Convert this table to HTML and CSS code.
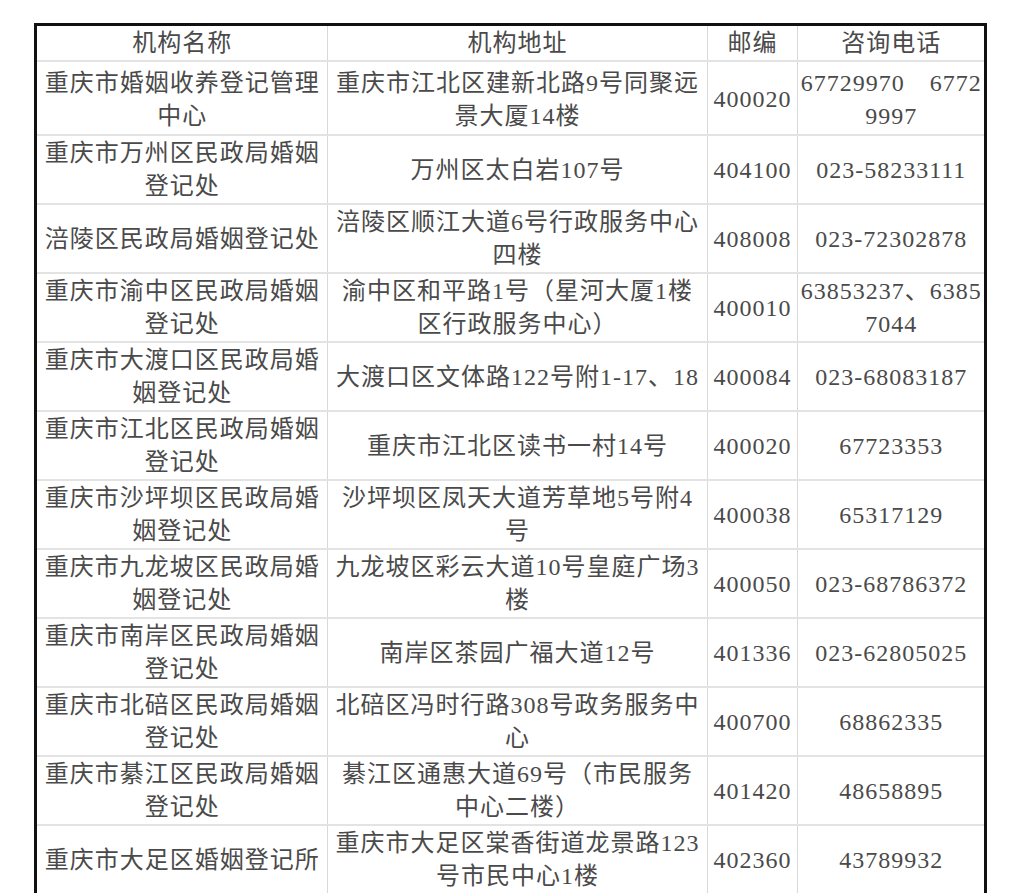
FILE: index.html
```html
<!DOCTYPE html>
<html lang="zh-CN">
<head>
<meta charset="utf-8">
<title>婚姻登记机构</title>
<link rel="stylesheet" href="styles.css">
</head>
<body>
<div class="frame">
<table class="grid">
<colgroup>
<col class="c1"><col class="c2"><col class="c3"><col class="c4">
</colgroup>
<tr class="head"><td>机构名称</td><td>机构地址</td><td>邮编</td><td>咨询电话</td></tr>
<tr class="first"><td>重庆市婚姻收养登记管理<br>中心</td><td>重庆市江北区建新北路9号同聚远<br>景大厦14楼</td><td>400020</td><td>67729970　6772<br>9997</td></tr>
<tr><td>重庆市万州区民政局婚姻<br>登记处</td><td>万州区太白岩107号</td><td>404100</td><td>023-58233111</td></tr>
<tr><td>涪陵区民政局婚姻登记处</td><td>涪陵区顺江大道6号行政服务中心<br>四楼</td><td>408008</td><td>023-72302878</td></tr>
<tr><td>重庆市渝中区民政局婚姻<br>登记处</td><td>渝中区和平路1号（星河大厦1楼<br>区行政服务中心）</td><td>400010</td><td>63853237、6385<br>7044</td></tr>
<tr><td>重庆市大渡口区民政局婚<br>姻登记处</td><td>大渡口区文体路122号附1-17、18</td><td>400084</td><td>023-68083187</td></tr>
<tr><td>重庆市江北区民政局婚姻<br>登记处</td><td>重庆市江北区读书一村14号</td><td>400020</td><td>67723353</td></tr>
<tr><td>重庆市沙坪坝区民政局婚<br>姻登记处</td><td>沙坪坝区凤天大道芳草地5号附4<br>号</td><td>400038</td><td>65317129</td></tr>
<tr><td>重庆市九龙坡区民政局婚<br>姻登记处</td><td>九龙坡区彩云大道10号皇庭广场3<br>楼</td><td>400050</td><td>023-68786372</td></tr>
<tr><td>重庆市南岸区民政局婚姻<br>登记处</td><td>南岸区茶园广福大道12号</td><td>401336</td><td>023-62805025</td></tr>
<tr><td>重庆市北碚区民政局婚姻<br>登记处</td><td>北碚区冯时行路308号政务服务中<br>心</td><td>400700</td><td>68862335</td></tr>
<tr><td>重庆市綦江区民政局婚姻<br>登记处</td><td>綦江区通惠大道69号（市民服务<br>中心二楼）</td><td>401420</td><td>48658895</td></tr>
<tr class="last"><td>重庆市大足区婚姻登记所</td><td>重庆市大足区棠香街道龙景路123<br>号市民中心1楼</td><td>402360</td><td>43789932</td></tr>
</table>
</div>
</body>
</html>
```

FILE: styles.css
```css
html, body {
  margin: 0;
  padding: 0;
  background: #ffffff;
}

body {
  padding: 23px 0 0 34px;
}

.frame {
  width: 947px;
  border: 3px solid #111111;
  border-bottom: none;
}

.grid {
  width: 947px;
  table-layout: fixed;
  border-collapse: collapse;
  border-style: hidden;
  font-family: "Liberation Serif", "Noto Sans CJK SC", serif;
  font-size: 24px;
  letter-spacing: 1px;
  line-height: 33px;
  color: #4a4a4a;
}

.c1 { width: 290px; }
.c2 { width: 380px; }
.c3 { width: 90px; }
.c4 { width: 187px; }

.grid td {
  padding: 1px 0 0 1px;
  text-align: center;
  vertical-align: middle;
  white-space: nowrap;
  border-left: 1px solid #d9d9d9;
  border-right: 1px solid #d9d9d9;
  border-top: 2px solid #e3e3e3;
  border-bottom: 2px solid #e3e3e3;
}

.grid .head td {
  height: 32px;
}

.grid .first td {
  height: 69px;
  padding-top: 3px;
}
```
